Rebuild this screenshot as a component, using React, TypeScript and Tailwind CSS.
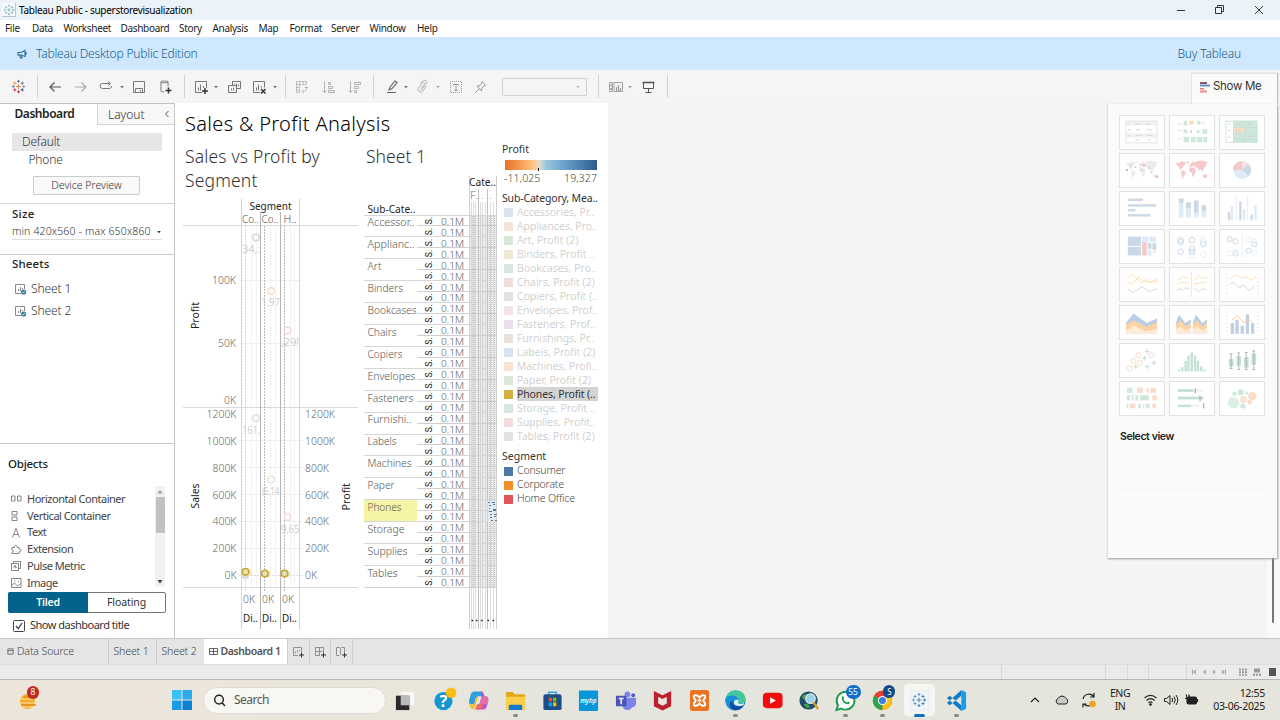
import React from "react";

type Kids = { children?: React.ReactNode };

/* ---------- small helpers ---------- */
function Icon({ children, className = "" }: Kids & { className?: string }) {
  return (
    <svg viewBox="0 0 16 16" fill="none" stroke="currentColor" strokeWidth="1" className={"h-4 w-4 shrink-0 " + className}>
      {children}
    </svg>
  );
}
const Caret = ({ className = "" }: { className?: string }) => (
  <svg viewBox="0 0 6 6" className={"h-1.5 w-1.5 shrink-0 " + className}>
    <path d="M1.200 2h3.600L3 4.200z" fill="currentColor" />
  </svg>
);
const Sep = ({ className = "" }: { className?: string }) => <div className={"h-[23px] w-px shrink-0 bg-[#d2d2d2] " + className} />;

type LabelProps = Kids & { x: number; y: number; w?: number; s?: number; f?: string; a?: "start" | "end" | "middle"; wt?: number; r?: boolean; c?: string };

function Label({ x, y, w, s = 10.5, f = "#555", a = "start", wt = 300, r, c, children }: LabelProps) {
  return (
    <text x={x} y={y} fontSize={s} fill={f} fontWeight={wt} textAnchor={a} textLength={w} lengthAdjust="spacingAndGlyphs" className={c} transform={r ? `rotate(-90 ${x} ${y})` : undefined}>
      {children}
    </text>
  );
}

function Sparkle({ className, colors }: { className: string; colors: string[] }) {
  const pts = [[8, 8, 2.6], [8, 2.4, 1.6], [8, 13.6, 1.6], [2.4, 8, 1.6], [13.6, 8, 1.6], [4, 4.4, 1.7], [12, 4.4, 1.7], [4, 11.6, 1.7], [12, 11.6, 1.7]];
  return (
    <svg viewBox="0 0 16 16" className={className} fill="none" strokeWidth="0.9">
      {pts.map(([x, y, r], i) => (
        <path key={i} d={`M${x - r} ${y}h${2 * r}M${x} ${y - r}v${2 * r}`} stroke={colors[i % colors.length]} />
      ))}
    </svg>
  );
}

/* ---------- window top ---------- */
function TitleBar() {
  return (
    <div className="flex h-5 items-center bg-[#ebf3f8] text-black">
      <div className="ml-0.5 flex h-3.5 w-3.5 items-center justify-center border-r border-b border-[#b9c4cc] bg-[#f8fbfd]">
        <Sparkle className="h-3 w-3" colors={["#5f9fb8", "#7db2c6"]} />
      </div>
      <span className="ml-[3px] text-[10px] tracking-[-0.29px]">Tableau Public - superstorevisualization</span>
      <svg viewBox="0 0 100 20" className="mr-[10px] ml-auto h-5 w-[100px]" fill="none" stroke="#333" strokeWidth="1">
        <path d="M7 10.500h8M45.500 7.500h6v6h-6zM47.500 7V5.500h6v6H52M85 6l8 8M93 6l-8 8" />
      </svg>
    </div>
  );
}

function MenuBar() {
  return (
    <div className="flex h-[17px] items-center bg-white text-[10px] tracking-[-0.32px] text-[#1c1c1c]">
      <span className="w-[27px] pl-[5px]">File</span>
      <span className="w-[31.500px] pl-[5px]">Data</span>
      <span className="w-[57px] pl-[5px]">Worksheet</span>
      <span className="w-[58.500px] pl-[5px]">Dashboard</span>
      <span className="w-[33.500px] pl-[5px]">Story</span>
      <span className="w-[46px] pl-[5px]">Analysis</span>
      <span className="w-[31px] pl-[5px]">Map</span>
      <span className="w-[41.500px] pl-[5px] tracking-[-0.2px]">Format</span>
      <span className="w-[38.500px] pl-[5px]">Server</span>
      <span className="w-[47.500px] pl-[5px]">Window</span>
      <span className="pl-[5px]">Help</span>
    </div>
  );
}

function Banner() {
  return (
    <div className="flex h-[33px] items-center bg-[#cfe8fe] text-[12px] font-light tracking-[-0.18px] text-[#14618f]">
      <svg viewBox="0 0 10 10" className="ml-[17px] h-[10px] w-[10px]" fill="none" stroke="#2a6d94" strokeWidth="1.1">
        <path d="M1 3.500h3l4-2v6l-4-1.500H1zM2.500 6l1 3h1.500l-.6-3M9 3v3" />
      </svg>
      <span className="ml-[9px]">Tableau Desktop Public Edition</span>
      <span className="mr-[39px] ml-auto">Buy Tableau</span>
    </div>
  );
}

function Toolbar() {
  return (
    <div className="flex h-[34px] items-center bg-[#f5f5f5] pb-px text-[#666]">
      <Sparkle className="ml-[11px] h-[15px] w-[15px]" colors={["#e8762d", "#5b6591", "#c72035", "#59879b", "#7199a6", "#eb912c", "#5b6591", "#c72035", "#1f457e"]} />
      <Sep className="ml-[11px]" />
      <Icon className="ml-[9px] text-[#555]"><path d="M14 8H3M7.500 3.500L3 8l4.500 4.500" strokeWidth="1.2" /></Icon>
      <Icon className="ml-[10px] text-[#aaa]"><path d="M2 8h11M8.500 3.500L13 8l-4.500 4.500" strokeWidth="1.1" /></Icon>
      <Icon className="ml-[9px] text-[#777]"><path d="M11.500 4.500H4.500a2.500 2.500 0 000 5h7A2.300 2.300 0 0013.500 7M10 2.500l2.500 2-2.500 2" /></Icon>
      <Caret className="ml-[5px]" />
      <Icon className="ml-1.5 text-[#777]"><path d="M2.500 2.500h11v11h-11zM4.500 13.500V9.500h7v4M9.500 11v1.500" /></Icon>
      <Icon className="ml-[10px] text-[#777]"><path d="M4 2.800c0-1 7-1 7 0v4.500M4 2.800c0 1.300 7 1.300 7 0M4 3v9c0 .5 1 .8 3 .8" /><path d="M11.500 8.500v6M8.500 11.500h6" strokeWidth="1.5" stroke="#333" /></Icon>
      <Sep className="ml-[11px] bg-[#bdbdbd]" />
      <Icon className="ml-2 text-[#777]"><path d="M9 13.500H2.500V2.500h11V9M5.500 11.500V8.500M7.500 11.500V5.500M10.500 9V7" /><path d="M12 9v6M9 12h6" strokeWidth="1.5" stroke="#333" /></Icon>
      <Caret className="ml-1" />
      <Icon className="ml-[7px] text-[#666]"><path d="M6.500 6V2.500h8V9.500h-4M2.500 6.500h8v7h-8zM8.500 5.500V4.500M10.500 7V4.500M12.500 7.500V5.500M5.500 11.500V9.500M7.500 11.500V8.500" strokeWidth=".9" /></Icon>
      <Icon className="ml-[9px] text-[#777]"><path d="M9 13.500H2.500V2.500h11V8.500M5.500 11.500V8.500M7.500 11.500V5.500M10.500 8.500V7" /><path d="M10 10l4.500 4.500M14.500 10L10 14.500" strokeWidth="1.5" stroke="#333" /></Icon>
      <Caret className="ml-[5px]" />
      <Sep className="ml-[7px]" />
      <Icon className="ml-2 text-[#aaa]"><path d="M2.500 2.500h10v3h-10zM2.500 5.500V13.500h3v-8M5.500 2.500v3M9 2.500v3M2.500 8.500h3M2.500 11h3M12.500 8v1.500a3 3 0 01-3 3H8M11 9l1.500-1.500L14 9M9.500 11L8 12.500 9.500 14" strokeWidth=".9" strokeDasharray="2 .6" /></Icon>
      <Icon className="ml-[11px] text-[#aaa]"><path d="M3.500 2.500v11M1.500 11.500l2 2 2-2M7.500 3.500h2v2h-2zM7.500 7.500h4v2h-4zM7.500 11.500h6v2h-6z" strokeWidth=".9" /></Icon>
      <Icon className="ml-[10px] text-[#aaa]"><path d="M3.500 2.500v11M1.500 11.500l2 2 2-2M7.500 3.500h6v2h-6zM7.500 7.500h4v2h-4zM7.500 11.500h2v2h-2z" strokeWidth=".9" /></Icon>
      <Sep className="ml-[10px]" />
      <Icon className="ml-[10px]"><path d="M5 11l1-3 5-6 2 1.500-5 6zM3 13.500h9" strokeWidth="1.1" /></Icon>
      <Caret className="ml-[3px]" />
      <Icon className="ml-[5px] text-[#aaa]"><path d="M11.500 5.500l-4.500 6a1.800 1.800 0 01-3-2l4.500-6a1.300 1.300 0 012 1.500L7 9.500M12.500 7l-4 5.500a2.300 2.300 0 01-2.500.8M6 4.500l2-2a2.500 2.500 0 014.500 2.500" strokeWidth=".9" /></Icon>
      <Caret className="ml-[5px] text-[#aaa]" />
      <Icon className="ml-[7px] text-[#999]"><path d="M2.500 2.500h11v11h-11z" strokeDasharray="1 1" strokeDashoffset=".5" /><path d="M5.500 6.500V5.500h5v1M8 5.500V11.500M6.500 11.500h3" /></Icon>
      <Icon className="ml-2 text-[#999]"><path d="M10 2.500l3.500 4-1.500.5-2 2-.5 3-4.500-5 3-.5 1.500-2zM7 10l-4 4" /></Icon>
      <div className="ml-[14px] flex h-[18px] w-[85px] items-center justify-end rounded-[1px] border border-[#d0d0d0] pr-[5px] text-[#bbb]"><Caret /></div>
      <Sep className="ml-[11px] bg-[#bdbdbd]" />
      <Icon className="ml-[9px] text-[#999]"><path d="M1.500 3.500h3v2.500h-3zM1.500 7h3v2.500h-3zM1.500 10.500h3v2h-3zM6 3.500h8.500v9H6z" strokeWidth=".9" /><path d="M8.500 12V8M10.500 12V6M12.500 12V9" strokeWidth="1.200" /></Icon>
      <Caret className="ml-[3px] text-[#999]" />
      <Icon className="ml-[7px] text-[#555]"><path d="M3.500 4v5.500h10V4M8.500 9.500v4M5.500 13.500h6" /><path d="M2.500 3.500h12" strokeWidth="1.600" /></Icon>
      <Sep className="ml-[11px]" />
    </div>
  );
}

/* ---------- side pane ---------- */
const SheetIcon = () => (
  <svg viewBox="0 0 12 12" className="h-3 w-3" fill="none" stroke="#888">
    <path d="M6 10.500H.5V1.500h9V6M3.500 8V6M5.500 8V4M7.500 6V5" />
    <circle cx="8.600" cy="9" r="2.600" fill="#3a82a0" stroke="none" />
    <path d="M7.500 9l.9.9 1.300-1.700" stroke="#fff" strokeWidth=".7" />
  </svg>
);

const objects: [string, React.ReactNode][] = [
  ["Horizontal Container", <path d="M.5 3h3.500v5H.5zM6.500 3h3.500v5H6.500z" />],
  ["Vertical Container", <path d="M1 1.500h5v3.500H1zM1 7h5v3.500H1z" />],
  ["Text", <path d="M1.500 10.500L5 1.500l3.500 9M3 7.500h4" />],
  ["Extension", <path d="M1 4.500h2.500c-1-3 3.500-3 2.500 0H8v2c2.500-.7 2.500 3 0 2.300v1.700H1V9c2 .3 2-2.300 0-2z" />],
  ["Pulse Metric", <path d="M.5 3.500h7v7h-7zM2.500 3.500v-2h7v7h-2M2 7h1.200L4 5.200l.9 3L5.600 7" />],
  ["Image", <path d="M.5 1.500H10v9H.5zM.5 8.500L3.500 6l3 3 3-2.500M3 4h1.200M7 4.500h1" />],
];

function SidePane() {
  return (
    <aside className="flex h-[535px] w-[175px] shrink-0 flex-col border-t border-r border-[#c4c4c4] bg-white font-light text-[#333]">
      <div className="flex h-[21px] shrink-0">
        <div className="w-[97px] pt-px pl-[14.500px] text-[12px] leading-[18px] font-semibold tracking-[-0.45px] text-[#222]">Dashboard</div>
        <div className="flex flex-1 border-b border-l border-[#d4d4d4] bg-[#f8f8f8]">
          <span className="w-[66px] pl-[10px] text-[12px] leading-[22px]">Layout</span>
          <svg viewBox="0 0 6 8" className="mt-[6px] h-[8px] w-[6px]" fill="none" stroke="#555"><path d="M4.500 1L1.500 4l3 3" /></svg>
        </div>
      </div>
      <div className="mt-2 ml-3 flex h-[18px] w-[150px] shrink-0 items-center bg-[#e6e6e6] pl-[10px] text-[12px] tracking-[-0.15px]">Default</div>
      <div className="flex h-[17px] shrink-0 items-center pl-[28.500px] text-[12px] tracking-[-0.2px]">Phone</div>
      <div className="mt-2 ml-[33px] flex h-[19px] w-[107px] shrink-0 items-center justify-center rounded-[1px] border border-[#ccc] bg-[#f9f9f9] text-[10.500px]">Device Preview</div>
      <div className="mt-2 h-px shrink-0 bg-[#d4d4d4]" />
      <div className="mt-[2px] h-4 shrink-0 pl-3 text-[11.5px] leading-4 font-medium tracking-[0.3px] text-[#222]">Size</div>
      <div className="ml-3 flex h-[18px] w-[150px] shrink-0 items-center justify-between border-b border-[#ddd] pt-[2px] text-[10.500px] tracking-[0.14px]">
        <span className="whitespace-nowrap">min 420x560 - max 650x860</span><Caret />
      </div>
      <div className="mt-[14px] h-px shrink-0 bg-[#c9c9c9]" />
      <div className="mt-px h-4 shrink-0 pl-3 text-[11.5px] leading-4 font-medium tracking-[0.1px] text-[#222]">Sheets</div>
      <div className="mt-[6px] flex h-[22px] shrink-0 items-center gap-1 pl-[15px] text-[12px] tracking-[-0.1px]"><SheetIcon />Sheet 1</div>
      <div className="flex h-[21px] shrink-0 items-center gap-1 pl-[15px] text-[12px] tracking-[-0.1px]"><SheetIcon />Sheet 2</div>
      <div className="mt-auto h-px shrink-0 bg-[#ccc]" />
      <div className="h-[42px] shrink-0 pt-3 pl-[8px] text-[11.5px] leading-4 font-medium tracking-[-0.25px] text-[#222]">Objects</div>
      <div className="flex h-[101px] shrink-0">
        <div className="flex w-[155px] flex-col pt-[5px] text-[11px] font-normal tracking-[-0.47px] text-[#444]">
          {objects.map(([n, d]) => (
            <div key={n} className="flex h-[16.700px] shrink-0 items-center pl-[11px]">
              <svg viewBox="0 0 12 12" className="mr-1 h-3 w-3" fill="none" stroke="#777" strokeWidth=".9">{d}</svg>
              <span>{n}</span>
            </div>
          ))}
        </div>
        <div className="flex w-[10px] flex-col items-center bg-[#f1f1f1]">
          <svg viewBox="0 0 10 11" className="h-[11px] w-[10px]"><path d="M2.500 7.500h5L5 4z" fill="#999" /></svg>
          <div className="h-9 w-[9px] bg-[#c1c1c1]" />
          <svg viewBox="0 0 10 11" className="mt-auto h-[11px] w-[10px]"><path d="M2.500 4h5L5 7.500z" fill="#444" /></svg>
        </div>
      </div>
      <div className="relative mt-[5px] ml-[8px] flex h-[21px] w-[158px] shrink-0 rounded-[2px] border border-[#777] bg-white text-[10.500px] font-normal text-[#333]">
        <div className="-my-px -ml-px flex w-[80px] items-center justify-center rounded-l-[2px] bg-[#03638c] font-semibold tracking-[-0.2px] text-white">Tiled</div>
        <div className="flex flex-1 items-center justify-center tracking-[-0.1px]">Floating</div>
      </div>
      <div className="flex h-[25px] shrink-0 items-center gap-[5px] pl-[13px] text-[11px] font-normal tracking-[-0.5px] text-[#333]">
        <svg viewBox="0 0 12 12" className="h-3 w-3" fill="none" stroke="#444"><rect x=".5" y=".5" width="11" height="11" rx="1" /><path d="M3 6l2.200 2.600L9 3" strokeWidth="1.300" /></svg>
        Show dashboard title
      </div>
    </aside>
  );
}

/* ---------- dashboard ---------- */
const SALES = ["1200K", "1000K", "800K", "600K", "400K", "200K", "0K"];
const SALES_Y = [414, 440.5, 467.500, 494.500, 521, 548, 575];

function SegmentChart() {
  return (
    <svg viewBox="176 195 186 437" className="h-[437px] w-[186px]" fill="none" strokeWidth="1">
      <path d="M251.500 226v361M256.500 226v361M270.500 226v361M275.500 226v361M290.500 226v361M294.500 226v361" stroke="#f3f3f3" />
      <path d="M239 280.500h60M239 343.500h60M239 440.500h64M239 467.500h64M239 494.500h64M239 521.500h64M239 548.500h64" stroke="#efefef" />
      <path d="M239 575.500h64" stroke="#dcdcdc" strokeDasharray="2 1" />
      <path d="M183 225.500h175M183 407.500h175M183 587.500h175" stroke="#dadada" />
      <path d="M241.500 199v430M299.500 199v430" stroke="#d4d4d4" />
      <path d="M260.500 212v417M280.500 212v417" stroke="#b4b4b4" />
      <path d="M245.500 226v365" stroke="#d8d8d8" strokeDasharray="2 1" />
      <path d="M264.500 226v365M284.500 226v365" stroke="#b8b8b8" strokeDasharray="2 1" />
      <g strokeWidth="1.300">
        <circle cx="256" cy="237.500" r="3.300" stroke="#ccd3df" /><circle cx="271" cy="291" r="3.300" stroke="#f5dcc0" /><circle cx="287.500" cy="330.500" r="3.300" stroke="#eed0d2" />
        <circle cx="256" cy="418" r="3.300" stroke="#d5dce6" /><circle cx="271" cy="479.500" r="3.300" stroke="#f5dfc8" /><circle cx="287.500" cy="517" r="3.300" stroke="#f0d6d8" />
      </g>
      <circle cx="245.500" cy="576" r="3.500" fill="#ddd" /><circle cx="249" cy="573" r="3" fill="#f3ead0" /><circle cx="267" cy="574" r="3.500" fill="#ede3bf" /><circle cx="286.500" cy="574" r="3.500" fill="#ede3bf" />
      <g stroke="#c3a935" strokeWidth="1.600" fill="#eadfb4">
        <circle cx="245.500" cy="571.800" r="3.300" /><circle cx="264.800" cy="573.500" r="3.300" /><circle cx="284.500" cy="573.500" r="3.300" />
      </g>
      <Label x={249.500} y={210} w={42} f="#222" wt={400}>Segment</Label>
      <Label x={242} y={223} w={17}>Co..</Label><Label x={261.500} y={223} w={17}>Co..</Label><Label x={283.500} y={223} w={13}>H..</Label>
      <Label x={242} y={253} w={18} f="#bbb">34,:</Label><Label x={261.500} y={306} w={18.500} f="#bbb">1,97</Label><Label x={281} y={346} w={18} f="#bbb">,29!</Label>
      <Label x={242} y={434} w={18} f="#bbb">161,</Label><Label x={261.500} y={495} w={18} f="#bbb">)6,14</Label><Label x={281} y={533} w={18.500} f="#bbb">9,65</Label>
      <Label x={236} y={284} w={24} a="end" f="#666">100K</Label><Label x={236} y={347} w={18} a="end" f="#666">50K</Label><Label x={236} y={404} w={12} a="end" f="#666">0K</Label>
      {SALES.map((t, i) => (
        <React.Fragment key={t}>
          <Label x={236.500} y={SALES_Y[i] + 4} w={t.length * 6} a="end" f="#666">{t}</Label>
          <Label x={305} y={SALES_Y[i] + 4} w={t.length * 6} f="#666">{t}</Label>
        </React.Fragment>
      ))}
      <Label x={198.500} y={329} w={27} f="#222" wt={400} r>Profit</Label>
      <Label x={198.500} y={508.500} w={25} f="#222" wt={400} r>Sales</Label>
      <Label x={350} y={510.500} w={27.500} f="#222" wt={400} r>Profit</Label>
      {[243, 262, 282].map((x) => (
        <React.Fragment key={x}>
          <Label x={x} y={603} w={12} f="#666">0K</Label><Label x={x} y={622} w={15} f="#222" wt={400}>Di..</Label>
        </React.Fragment>
      ))}
    </svg>
  );
}

const SUBS: [string, number][] = [["Accessor..", 47], ["Applianc..", 47], ["Art", 14], ["Binders", 35.500], ["Bookcases", 49], ["Chairs", 29], ["Copiers", 35], ["Envelopes", 48], ["Fasteners", 46], ["Furnishi..", 44], ["Labels", 29], ["Machines", 44], ["Paper", 27], ["Phones", 34], ["Storage", 37], ["Supplies", 40], ["Tables", 30]];

function SubCategoryTable() {
  const top = 215.500;
  const step = 21.900;
  return (
    <svg viewBox="362 172 138 460" className="h-[460px] w-[138px]" fill="none">
      <rect x="364" y={top + 13 * step} width="53" height={step} fill="#f5f3a4" />
      <rect x="470" y={top} width="27" height={17 * step} fill="#ececec" />
      <path d="M472.500 216v372M474.500 216v372M482.500 216v372M489.500 216v372M491.500 216v372M494.500 216v372" stroke="#c4c4c4" strokeDasharray="1 1" />
      <path d="M469.500 176v453M496.500 176v453" stroke="#cfcfcf" />
      <path d="M478.500 189v440M487.500 189v440" stroke="#c0c0c0" />
      <path d="M471.500 202v427M473.500 202v427M475.500 202v427M480.500 202v427M482.500 202v427M485.500 202v427M490.500 202v427M493.500 202v427" stroke="#cecece" strokeWidth=".7" />
      {SUBS.map(([n, w], i) => {
        const y = top + i * step;
        return (
          <g key={n}>
            <path d={`M364 ${Math.round(y) - 0.5}H497`} stroke="#d6d6d6" />
            <path d={`M417 ${Math.round(y + step / 2) - 0.5}H497`} stroke="#cecece" />
            <Label x={367.500} y={y + 10.800} w={w}>{n}</Label>
            {[9.300, 20.250].map((d) => (
              <React.Fragment key={d}>
                <Label x={441} y={y + d} w={23} s={9.300} f="#666" c="font-['Roboto']">0.1M</Label>
                <Label x={432} y={y + d - 0.500} w={7.500} s={9} f="#111" wt={400} c="font-['Roboto']" r>S.</Label>
              </React.Fragment>
            ))}
          </g>
        );
      })}
      <path d="M364 587.500H497" stroke="#d2d2d2" />
      <rect x="487.500" y="501" width="8.500" height="21" fill="#e3ebf1" />
      <path d="M488 502.500h2m2 0h3m-6 3h2m2-1h2m-6 4h1m3 1h3m-7 2h3m1-1h3m-6 4h2m2 0h3m-7 3h2m2-1h2m-5 4h2m2 0h2" stroke="#50789c" strokeWidth="1.200" />
      <Label x={469} y={186} w={27} f="#222" wt={400}>Cate..</Label>
      <Label x={470} y={199} w={8} f="#777">F.</Label><Label x={481} y={199} s={9} f="#888">.</Label><Label x={489} y={199} s={9} f="#888">.</Label>
      <Label x={367.500} y={213} w={48} f="#222" wt={400}>Sub-Cate..</Label>
      <path d="M471.500 620.500h1.500M476 620.500h1.500M481 620.500h1.500M487.500 620.500h1.500M492.500 620.500h1.500" stroke="#222" strokeWidth="1.500" />
    </svg>
  );
}

const LEGEND: [string, string][] = [
  ["Accessories, Pr..", "bg-[#d9e3ed]"], ["Appliances, Pro..", "bg-[#f6e3d3]"], ["Art, Profit (2)", "bg-[#dae8da]"], ["Binders, Profit ..", "bg-[#efe7d3]"], ["Bookcases, Pro..", "bg-[#d8e5e5]"],
  ["Chairs, Profit (2)", "bg-[#f3dcdd]"], ["Copiers, Profit (..", "bg-[#e2e1e1]"], ["Envelopes, Prof..", "bg-[#f3e2e8]"], ["Fasteners, Prof..", "bg-[#e9dfe8]"], ["Furnishings, Pr..", "bg-[#e8e0dc]"],
  ["Labels, Profit (2)", "bg-[#d9e3ed]"], ["Machines, Profi..", "bg-[#f6e3d3]"], ["Paper, Profit (2)", "bg-[#dae8da]"], ["Phones, Profit (..", "bg-[#d2b13d]"], ["Storage, Profit ..", "bg-[#d8e5e5]"],
  ["Supplies, Profit..", "bg-[#f3dcdd]"], ["Tables, Profit (2)", "bg-[#e2e1e1]"],
];

function Legends() {
  return (
    <div className="flex w-[106px] flex-col pt-px pl-[2px] text-[10.5px] font-light whitespace-nowrap text-[#444]">
      <div className="h-[19px] leading-[16px] font-normal text-[#333]">Profit</div>
      <div className="relative ml-[3px] h-[10px] w-[92px] bg-[linear-gradient(90deg,#e8702a,#f8a65a_20%,#fbc98d_32%,#dfdcd0_37%,#97c7dc_45%,#6aa1cb_65%,#2b5c8a)]">
        <div className="absolute top-[8px] left-[33px] h-[3px] w-px bg-black" />
      </div>
      <div className="flex h-[17px] w-[95px] items-center justify-between pl-[2px] tracking-[0.1px]"><span>-11,025</span><span>19,327</span></div>
      <div className="mt-[4px] h-[14px] leading-[14px] font-normal tracking-[-0.17px] text-[#333]">Sub-Category, Mea..</div>
      {LEGEND.map(([n, c]) => (
        <div key={n} className="flex h-[14px] items-center gap-1 pl-[2px]">
          <div className={"h-[9px] w-[9px] " + c} />
          <span className={"h-[14px] w-[81px] leading-[14px] " + (n.startsWith("Phones") ? "bg-[#d4d4d4] font-normal tracking-[-0.12px] text-[#333]" : "tracking-[0.15px] text-[#bebebe]")}>{n}</span>
        </div>
      ))}
      <div className="mt-[6px] h-[15px] leading-[15px] font-normal text-[#333]">Segment</div>
      {[["Consumer", "bg-[#4e79a7]"], ["Corporate", "bg-[#f28e2b]"], ["Home Office", "bg-[#e15759]"]].map(([n, c]) => (
        <div key={n} className="flex h-[14px] items-center gap-1 pl-[2px] tracking-[-0.15px]"><div className={"h-[9px] w-[9px] " + c} /><span>{n}</span></div>
      ))}
    </div>
  );
}

function Dashboard() {
  return (
    <main className="h-[535px] w-[433px] shrink-0 bg-white pt-px pl-px font-light">
      <h1 className="h-[36px] pt-[6px] pl-[9px] text-[20px] leading-[28px] tracking-[0.34px] text-black">Sales &amp; Profit Analysis</h1>
      <div className="flex">
        <section className="w-[186px]">
          <h2 className="h-[55px] pt-[5px] pl-[9px] text-[17.500px] leading-[23.500px] tracking-[0.17px] text-[#333]">Sales vs Profit by<br />Segment</h2>
          <SegmentChart />
        </section>
        <section className="w-[138px]">
          <h2 className="h-[32px] pt-[5px] pl-1 text-[17.500px] leading-[23.500px] tracking-[0.05px] text-[#333]">Sheet 1</h2>
          <SubCategoryTable />
        </section>
        <Legends />
      </div>
    </main>
  );
}

/* ---------- Show Me ---------- */
const B = "#cbd8e6", LB = "#deebf7", O = "#fbdcb8", G = "#cfe8dc", R = "#f6c9c9", K = "#ddd";
const bars = (list: number[][], fill: string) => list.map(([x, y, w, h], i) => <rect key={i} x={x} y={y} width={w} height={h} fill={fill} />);
const rings = (list: number[][], stroke: string, r = 2.700) => list.map(([x, y], i) => <circle key={i} cx={x} cy={y} r={r} fill="none" stroke={stroke} strokeWidth=".8" />);
const WORLD = "M6 10l2-1 1 .6 2-1.600 4 .2 1.500.8-.5 2-2 1.200-.6 2-1.500.8-.6 2-1.300-.8-.5-2.200-2.200-1.800zM12 17.500l2.500.3 2 1.700-.7 2.200-1.600 1.300-.8 3.500-1-.6-.3-3.500-1-2.400zM17 8l2.500-.6-.3 2-1.400 1zM21.500 10.500l1.800-2.500 2 .3.300 2.700-1.200 1.600-2.300.3-.8 1.200-1-.3.3-2zM20.700 14.500l3.800-.3 2 2.600 1 .8-1.300 2.400-.6 2.600-1.200 1.600-1-.4-.7-4-2-1.200-.7-2.300zM25.500 9l3.500-1.500 4-.7 5 1.300 1.800.8-1.500 1.300-.5 2.700-1.600 1.300-.8 2.600-1.300.4.3 2.600-1-1.600-1.300-2.400-1.300 2.600-1.200-3-1.800-1.200-2.400-.6zM34.500 22.500l2.700-1.200 2 1.600-.5 2.300-1.500.2-2.600-.6z";

const views: React.ReactNode[] = [
  <>{bars([[6, 5, 33, 5], [6, 18, 33, 5]], "#f3f3f3")}<rect x="6" y="5.500" width="33" height="23" fill="none" stroke="#e2e2e2" /><path d="M8 8.500h3M15 8.500h7M27 8.500h5M8 14.500h4M17 14.500h4M28 14.500h6M8 21h3M16 20.500h8M28 20.500h6M16 25.500h4M29 25.500h3" stroke="#d4d4d4" /></>,
  <>{bars([[14, 5, 4, 5], [28, 5, 4, 4], [14, 14, 4, 4], [34, 14, 5, 5], [14, 22, 6, 6], [22, 22, 5, 6], [28, 22, 6, 6], [35, 22, 4, 6], [28, 15, 3, 3], [34, 6, 2, 2]], G)}{bars([[20, 5, 5, 4]], O)}{bars([[21, 15, 2, 3]], R)}<path d="M8 8.500h4M8 15.500h4M8 24.500h4" stroke="#ddd" /></>,
  <>{bars([[14, 5, 25, 23]], G)}{bars([[14, 12, 12, 6]], "#fbe0c8")}<path d="M6 5.500h33v22.500H6zM14 5.500V28M26 5.500V28M14 12h25M14 18h25M14 25h25" fill="none" stroke="#c2dfd0" strokeWidth=".8" /><path d="M8 8.500h3M8 15.500h3M8 22.500h3M16 8.500h6M29 8.500h5M16 15.500h6M29 21.500h6" stroke="#c4cec8" strokeWidth=".8" /></>,
  <><path d={WORLD} fill="#ececec" />{[[7, 17], [11, 12], [21, 11], [25, 12], [31, 15], [33, 19], [39, 24], [16, 14], [23, 17]].map(([x, y], i) => <circle key={i} cx={x} cy={y} r={i % 3 ? 0.900 : 1.400} fill="#ebb9bc" />)}</>,
  <path d={WORLD} fill={R} />,
  <><circle cx="23" cy="17" r="9.500" fill={LB} /><path d="M23 17L23 7.500A9.500 9.500 0 0013.500 17z" fill={R} /><path d="M23 17V7.500a9.500 9.500 0 016.500 2.500z" fill="#fae2e2" /><path d="M23 17l6.500-7a9.500 9.500 0 01.5 13.500z" fill={B} /></>,
  <>{bars([[8, 7, 16, 2.500], [8, 13, 30, 2.500], [8, 18, 8, 2.500], [8, 23.500, 24, 2.500]], B)}</>,
  <>{bars([[9, 12, 5, 15], [16.500, 17, 5.500, 10], [25, 22, 5, 5], [33, 20, 5, 7]], LB)}{bars([[9, 7, 5, 5], [16.500, 11, 5.500, 6], [25, 9, 5, 13], [33, 14, 5, 6]], B)}</>,
  <>{bars([[8, 21, 2.500, 9], [20, 10, 2.500, 20], [32, 24, 2.500, 6]], B)}{bars([[11, 15, 2.500, 15], [24, 18, 2.500, 12], [36, 14, 2.500, 16]], LB)}<path d="M17 4v26M29 4v26" stroke={K} strokeWidth=".7" /></>,
  <>{bars([[8, 7, 14, 10], [8, 18, 14, 9], [29, 14, 4, 6], [34, 14, 4, 7]], B)}{bars([[23, 7, 7, 6], [31, 7, 7, 6], [29, 21, 4, 6], [34, 22, 4, 2]], LB)}{bars([[23, 13, 5, 14]], R)}</>,
  <>{rings([[11, 11], [11, 13], [23, 11], [11, 23], [23, 20], [23, 23], [35, 15]], "#bdcfe0", 3)}{rings([[35, 10], [35, 26], [35, 13], [23, 28]], LB, 3)}</>,
  <>{rings([[10, 10], [16, 12], [16, 25], [36, 15], [30, 22]], "#bdcfe0")}{rings([[10, 9], [10, 25], [30, 10], [36, 12], [36, 24], [16, 23]], LB)}<path d="M23 4v25" stroke="#f0dcdc" strokeWidth=".7" /></>,
  <g fill="none" strokeWidth="1"><path d="M8 10l4-4 10 10 6-4 4 3 7-3M8 15l5 2 6-7 5 4 7 1 8-1" stroke={O} /><path d="M8 22l5 4 10-6 8 5 8-3" stroke={B} /></g>,
  <g fill="none" strokeWidth="1"><path d="M7 13l7-4 5 2M7 17l5-2 3 1 5-1M25 13l5-5 4 3 5-1M25 17l8-1 5-1" stroke={O} /><path d="M7 24l3-2 3 2 3-3 4 1M25 21l5 4 4-3 4 1" stroke={B} /><path d="M22.500 4v27" stroke={K} strokeWidth=".7" /></g>,
  <g fill="none" strokeWidth="1"><path d="M10 12l6-5 6 4 5-2 6 4 5-4" stroke={O} /><path d="M10 17l4-2 6 6 5-3 6 6 5-5" stroke={B} /><path d="M7 6v24M40 6v24" stroke="#e3e3e3" strokeWidth="2" strokeDasharray="1 3" /></g>,
  <><path d="M6 29V18l8-10 14 10 11-5v16z" fill="#b9cde4" /><path d="M6 29V20l8-5 14 7 11-5v12z" fill="#fbd4a5" /><path d="M6 29V26l9-5 12 6 12-3v5z" fill="#fdebd7" /></>,
  <><path d="M6 29V18l3-9 7 9 6-4v15zM24 29V18l3-9 7 9 5-4v15z" fill="#b9cde4" /><path d="M6 29V20l5-5 6 7 5-5v12zM24 29V20l5-5 5 7 5-5v12z" fill="#fbd4a5" /><path d="M6 29v-4l5-3 5 4 6-3v6zM24 29v-4l4-3 6 4 5-3v6z" fill="#fdebd7" /></>,
  <>{bars([[11, 18, 3.500, 11.500], [16, 15, 3.500, 14.500], [21.500, 21, 3.500, 8.500], [27, 9, 3.500, 20.500], [32.500, 18, 3.500, 11.500]], "#bfd0e3")}<path d="M12 15l6-5 7 8 5-4 4 3" fill="none" stroke="#fbc99a" /><path d="M7 6v24M40 6v24" stroke="#e3e3e3" strokeWidth="2" strokeDasharray="1 3" /></>,
  <>{rings([[10, 26], [14, 18], [19, 12], [21, 20], [33, 12]], "#fbd2b4")}<path d="M26 8h5M28.500 5.500v5M14 24h5M16.500 21.500v5M23 15h5M25.500 12.500v5M33 20h5M35.500 17.500v5M26 24h5M28.500 21.500v5" stroke="#b8dccb" strokeWidth=".9" /></>,
  <>{bars([[8, 27, 2.500, 2], [11.500, 24.500, 2.500, 4.500], [15, 18, 2.500, 11], [18, 12, 2.500, 17], [21.500, 9, 2.500, 20], [25, 12, 2.500, 17], [28, 18, 2.500, 11], [31.500, 24, 2.500, 5], [35, 27, 2.500, 2]], "#c3e2d3")}</>,
  <>{bars([[9, 16, 5, 8], [17, 13, 5, 10], [25, 14, 5, 11], [33, 10, 5, 12]], "#c3e2d3")}<path d="M11.500 10v16M19.500 9v18M27.500 8.500v19M35.500 7v20M10 10.500h3M18 9.500h3M26 9h3M34 7.500h3M10 26h3M18 27h3M26 27h3M34 27h3" stroke="#aaa" strokeWidth=".9" /></>,
  <>{bars([[7, 6, 6, 5.500], [7, 14, 3, 5.500], [12, 14, 2, 5.500], [16, 14, 3, 5.500], [21, 14, 9, 5.500], [7, 23, 1.500, 5], [19, 23, 3, 5], [27, 23, 4, 5]], G)}{bars([[18, 6, 6, 5.500], [28, 6, 2, 5.500], [32, 6, 6, 5.500], [34, 14, 5, 5.500], [10, 23, 6, 5], [24, 23, 1.500, 5], [34, 23, 4, 5]], "#fbdccb")}</>,
  <>{bars([[8, 7.500, 17, 3], [8, 15.500, 27, 3], [8, 24, 14, 2.500]], "#c3e2d3")}{bars([[26, 7.500, 9, 3], [22, 24, 9, 2.500]], "#f2f2f2")}<path d="M26.500 6.500v5.500M31.500 14.500v6M35.500 22.500v5.500" stroke="#999" /></>,
  <><circle cx="14" cy="22" r="6" fill="#dcefe5" /><circle cx="21.500" cy="11" r="3.300" fill={G} /><circle cx="15" cy="12.500" r="2.300" fill={G} /><circle cx="24.500" cy="18.500" r="3.800" fill="#fce2d0" /><circle cx="34" cy="15" r="4.500" fill="#fbdccb" /><circle cx="24" cy="25.500" r="2.800" fill={G} /><circle cx="31" cy="21.500" r="2.300" fill="#f5d8bf" /><circle cx="28" cy="12" r="2" fill="#dcefe5" /></>,
];

function ShowMe() {
  return (
    <div className="absolute top-[73px] right-[3px] z-10 flex w-[170px] flex-col items-end text-[#333]">
      <div className="flex h-[31px] w-[86px] items-center border-t border-l border-[#e4e4e4] bg-[#fafafa] pb-1 pl-[7px] shadow-[1px_0_1px_#bbb]">
        <svg viewBox="0 0 12 12" className="h-3 w-3"><rect x="1" y="1" width="7" height="2" fill="#8a5a78" /><rect x="1" y="3.500" width="10" height="2" fill="#6f8cc0" /><rect x="1" y="7" width="4" height="1.500" fill="#e07a7a" /><rect x="1" y="9.500" width="7" height="2" fill="#e88" /></svg>
        <span className="ml-[2px] font-['Inter','Open_Sans',sans-serif] text-[11.500px] tracking-[-0.3px] whitespace-nowrap">Show Me</span>
      </div>
      <div className="h-[454px] w-full border-l border-[#ddd] bg-[#fafafa] pt-[11px] pl-[11px] shadow-[1px_1px_2px_#999]">
        <div className="grid grid-cols-[46px_46px_46px] gap-x-1 gap-y-[3px]">
          {views.map((v, i) => (
            <svg key={i} viewBox="0 0 46 35" className="h-[35px] w-[46px] border border-[#e2e2e2] bg-white">{v}</svg>
          ))}
        </div>
        <div className="mt-[13px] ml-px font-['Inter','Open_Sans',sans-serif] text-[10.500px] leading-4 font-semibold tracking-[-0.4px] text-[#222]">Select view</div>
        <div className="mt-[44px] mr-[10px] h-px bg-[#f2f2f2]" />
      </div>
    </div>
  );
}

/* ---------- bottom ---------- */
const NewTab = ({ d }: { d: string }) => (
  <div className="flex w-[21.500px] items-center justify-center border-r border-[#cfcfcf]">
    <svg viewBox="0 0 12 12" className="h-[12px] w-[12px]" fill="none" stroke="#888" strokeWidth=".9"><path d={d} /><path d="M9.500 6.500v5M7 9h5" stroke="#333" strokeWidth="1" /></svg>
  </div>
);

function SheetTabs() {
  return (
    <div className="flex h-[26px] border-t border-[#c8c8c8] bg-[#e5e5e5] text-[10.5px] font-light whitespace-nowrap text-[#444]">
      <div className="flex w-[109px] items-center border-r border-[#cfcfcf] pl-[7px] tracking-[-0.1px]">
        <svg viewBox="0 0 8 8" className="mr-[3px] h-[7px] w-[7px]" fill="none" stroke="#666"><path d="M1 1h6v6H1zM1 3h6" /></svg>Data Source
      </div>
      <div className="w-[48px] border-r border-[#cfcfcf] pr-[3px] text-center leading-[25px] tracking-[-0.1px]">Sheet 1</div>
      <div className="w-[47px] pr-[3px] text-center leading-[25px] tracking-[-0.1px]">Sheet 2</div>
      <div className="flex w-[84px] items-center border-r border-[#cfcfcf] bg-white pl-[4.500px] font-semibold tracking-[-0.4px] text-[#555]">
        <svg viewBox="0 0 9 9" className="mr-[3px] h-[9px] w-[9px]" fill="none" stroke="#555" strokeWidth=".9"><path d="M.5 1.500h8v6h-8zM.5 4.500h8M4.500 1.500v6" /></svg>Dashboard 1
      </div>
      <NewTab d="M6 9.500H1.500V1.500h8V6M3.500 7.500V5.500M5.500 6.500V4.500M7.500 5V4" />
      <NewTab d="M6 9.500H1.500V1.500h8V6M1.500 5.500h7M5.500 1.500v8" />
      <NewTab d="M4.500 9.500H1.500V1.500h3l1 1 1-1h3V6M5.500 2.500V9" />
    </div>
  );
}

function StatusBar() {
  return (
    <div className="flex h-4 justify-end border-t border-b border-t-[#dcdcdc] border-b-[#b8b8b0] bg-[#ebebeb]">
      <div className="w-[104px] border-l border-[#d6d6d6]" />
      <div className="w-[22px] border-l border-[#d6d6d6]" />
      <div className="w-[21px] border-l border-[#d6d6d6]" />
      <div className="w-[38px] border-l border-[#d6d6d6]" />
      <div className="w-[48px] border-l border-[#d6d6d6]">
        <svg viewBox="0 0 46 14" className="h-[14px] w-[46px]" fill="#aaa"><path d="M5 4.500h1v5H5zM9 4.500v5L6 7zM19 4.500v5L16 7zM26 4.500v5L29 7zM35 4.500v5L38 7zM38 4.500h1v5h-1z" /></svg>
      </div>
      <div className="w-[46px]">
        <svg viewBox="0 0 46 14" className="h-[14px] w-[46px]" fill="#999"><path d="M5 3.500h2v2H5zM8 3.500h2v2H8zM11 3.500h2v2h-2zM5 6.300h2v2H5zM8 6.300h2v2H8zM11 6.300h2v2h-2zM5 9.200h2v1.500H5zM8 9.200h2v1.500H8zM11 9.200h2v1.500h-2zM20 3.500h6v4h-6zM19 8.800h2v2h-2zM22 8.800h2v2h-2zM25 8.800h2v2h-2z" /><path d="M35 3h7v8h-7z" fill="#555" /></svg>
      </div>
    </div>
  );
}

const apps: { node: React.ReactNode; dot?: boolean; active?: boolean }[] = [
  { node: <><rect x="7" y="3" width="14" height="14" fill="#f8f8f8" /><rect x="2" y="7" width="14" height="15" fill="#2a2a2a" /><rect x="7" y="7" width="9" height="10" fill="#bbb" /></> },
  { node: <><circle cx="13" cy="12.500" r="9.500" fill="#1296d4" /><text x="13" y="19" fontSize="17" fontWeight="700" fill="#fff" textAnchor="middle">?</text><circle cx="21" cy="4" r="5.500" fill="#fbbc13" /></> },
  { node: <><path d="M8 2.500h6.500c1.500 0 2 1 2.500 2.500l.8 2.500H12c-1.500 0-2.300 1-2.800 2.500L7.500 16H4C1 16 2 12 3 9l1-3.500c.6-2 2-3 4-3z" fill="#2b9fe0" /><path d="M2.500 13c.3 3 1 3 3.500 3h1.500L9.200 10c.5-1.500 1.300-2.500 2.800-2.500L9.500 15 8 19c-.5 1.300-1 2-2 2-2.500-.5-4-4-3.500-8z" fill="#f0bf3a" /><path d="M14 2.500c2.500 0 3 .5 3.500 2.500l.8 2.500h1.500C22 8 23 10 22 13l-1.300 5c-.7 2.500-2 3.500-4 3.500H9c2 0 2.500-1.500 3-3l3-9.500c.5-1.500 0-4-1-6.500z" fill="#b659cf" /><path d="M6 21c2 .8 2.500 0 3-1.500L10.500 16h6.300l-.8 2.500c-.5 2-1.500 3-3 3H9c-1.500 0-2.500 0-3-.5z" fill="#f2695c" /><path d="M18.300 7.500C21.500 7.500 23 9.500 22 13l-.8 3H13l1.800-6c.5-1.500 1.500-2.500 3.500-2.500z" fill="#e070a8" /></> },
  { node: <><path d="M2 4q0-1 1-1h6l2 2.500h10q1 0 1 1V20H2z" fill="#e8a614" /><path d="M2 8h20v13q0 1-1 1H3q-1 0-1-1z" fill="#fbcf4c" /><path d="M5 22v-4q0-1.500 1.500-1.500h11q1.500 0 1.500 1.500v4z" fill="#1278c8" /></>, dot: true },
  { node: <><path d="M8 6V3.500h8V6" fill="none" stroke="#38a5dc" strokeWidth="1.600" /><rect x="2.500" y="5.500" width="19" height="16.500" rx="2" fill="#1d4e89" /><rect x="8" y="9" width="3.500" height="4" fill="#f25022" /><rect x="12.500" y="9" width="3.500" height="4" fill="#7fba00" /><rect x="8" y="14" width="3.500" height="4" fill="#00a4ef" /><rect x="12.500" y="14" width="3.500" height="4" fill="#ffb900" /></> },
  { node: <><rect x="2" y="1.500" width="20" height="21.500" rx="1" fill="#0896d7" /><text x="11.800" y="14.500" fontSize="7" fontStyle="italic" fontWeight="600" fill="#fff" textAnchor="middle" textLength="17" lengthAdjust="spacingAndGlyphs">myhp</text></> },
  { node: <><circle cx="14" cy="5.500" r="3" fill="#7b83eb" /><circle cx="20" cy="6.500" r="2" fill="#5059c9" /><path d="M9 9h14v7q-1 3-4 3-2 3-6 3-5-1-4-6z" fill="#7b83eb" /><rect x="2" y="7" width="11" height="11" rx="1" fill="#4b53bc" /><path d="M5 10h5M7.500 10v6" stroke="#fff" strokeWidth="1.500" /></> },
  { node: <path d="M3 2l9 4.500L21 2v16l-9 4.500L3 18zM7.500 8v7l4.500 2.500 4.500-2.500V8L12 10.500z" fill="#c01f2e" fillRule="evenodd" /> },
  { node: <><rect x="2" y="1" width="20" height="22" rx="2.500" fill="#ea7425" /><path d="M12 9C10 6 6 5.500 6 8.500c0 2 2 2 2 3.500s-2 1.500-2 3.500c0 3 4 2.500 6-.5 2 3 6 3.500 6 .5 0-2-2-2-2-3.500s2-1.500 2-3.500c0-3-4-2.500-6 .5zM10 12h4" fill="none" stroke="#fff" strokeWidth="2" /></> },
  { node: <><circle cx="12" cy="12" r="10.500" fill="#1475c4" /><path d="M2 9C4-1 21-2 22.500 11c0 4-4 5-8 4 2-7-4-9-12.500-6z" fill="#43c6a0" /><path d="M14 15c4 1 8-1 8.500-4 0 0-1-7-7-9 6 0 9 9 4 12-2 1-4 1.500-5.500 1z" fill="#6fd65a" /><path d="M2 9C7 5 15 7 15 12c0 1-.5 2-1 2-1-3-5-3-6 1-1 3 1 6 4 7C5 23 0 16 2 9z" fill="#1b8fd6" /><path d="M8.500 12c-1 5 4 8.500 12 5-3 5-9 6.500-13 3-2-3-2-6 1-8z" fill="#124a9c" /><path d="M14.800 11.500c.6 1 .4 2-.5 3 1.500 1.500 4.500 1.500 6.500 0l-.5 2.500c-5 1.800-9.500 0-10-2.500-.3-2 1.500-4 4.500-3z" fill="#e6f2f2" /></>, dot: true },
  { node: <><rect x="2" y="4" width="20.500" height="16" rx="4" fill="#f20d0d" /><path d="M9.500 8.500v7l6-3.500z" fill="#fff" /></> },
  { node: <><circle cx="11" cy="12" r="9.500" fill="#1e4f68" /><path d="M4 8c3-4 5-3 6-1s-2 4-4 4zM6 16l4-1 3 4-4 1zM13 4l4 2-2 3z" fill="#4c9a54" /><circle cx="13" cy="10" r="5" fill="#9bd2ea" stroke="#d8e6ea" strokeWidth="1.300" /><path d="M16 14l5 7" stroke="#d89a2c" strokeWidth="2.500" /></> },
  { node: <><path d="M2.500 22l1.600-5A9.300 9.300 0 1112 21.500a9 9 0 01-4.500-1z" fill="#fff" stroke="#1f9a4c" strokeWidth="2" /><path d="M8.500 8c1-1 2 0 2 1.500L10 11c1 2 2 2.500 3.500 3l1.300-1c2 .5 2 2 1 2.500-4 2-9-4-7.300-7.500z" fill="#1f9a4c" /></>, dot: true },
  { node: <><circle cx="12" cy="12" r="10" fill="#e8402f" /><path d="M12 12L3.300 7A10 10 0 0012 22z" fill="#2da44f" /><path d="M12 12l8.600-5A10 10 0 0112 22z" fill="#fbc116" /><path d="M3.300 7A10 10 0 0120.700 7z" fill="#e8402f" /><circle cx="12" cy="12" r="4.800" fill="#fff" /><circle cx="12" cy="12" r="3.700" fill="#3b7de0" /></>, dot: true },
  { node: <><rect x="3" y="2" width="18" height="20" fill="#f4f7fa" stroke="#dce3ea" strokeWidth=".7" /></>, dot: true, active: true },
  { node: <><path d="M17 1l5 2.500v17L17 23z" fill="#1b9be8" /><path d="M17 1v6L5 17l-3-2.500L14 4zM17 23v-6L5 7 2 9.500 14 20z" fill="#0f7ac6" /></>, dot: true },
];

function Taskbar() {
  return (
    <div className="flex h-10 items-center bg-[linear-gradient(90deg,#ece5dc,#ebe6dc_30%,#e4e5dc_45%,#e5e5dc)] text-[#222]">
      <div className="relative ml-[17px] h-7 w-7">
        <svg viewBox="0 0 28 28" className="h-7 w-7"><circle cx="10.500" cy="15.500" r="7.500" fill="#f4ac25" /><path d="M1 13h15M3 17h15M2 21h13" stroke="#fbe0a0" strokeWidth="1" /><path d="M4 19h15M7 11h10" stroke="#e08a1c" strokeWidth="1.500" /></svg>
        <span className="absolute top-0 right-[6px] flex h-[13px] w-[12px] items-center justify-center rounded-full bg-[#bf2a1f] text-[8.500px] leading-none text-white">8</span>
      </div>
      <svg viewBox="0 0 20 20" className="ml-[127px] h-5 w-5"><path d="M0 0h9.500v9.500H0z" fill="#3cc0f5" /><path d="M10.500 0H20v9.500h-9.500z" fill="#29abee" /><path d="M0 10.500h9.500V20H0z" fill="#1a9be6" /><path d="M10.500 10.500H20V20h-9.500z" fill="#0b80d6" /></svg>
      <div className="ml-[11px] flex h-[27px] w-[183px] items-center rounded-full border border-[#dcdcd6] bg-[#f8f7f3] pl-[9px] text-[12px] tracking-[-0.5px] text-[#555]">
        <svg viewBox="0 0 14 14" className="mr-[8px] h-[13px] w-[13px]" fill="none" stroke="#222" strokeWidth="1.500"><circle cx="6.500" cy="6" r="4.700" /><path d="M9.800 9.500l3 3.500" /></svg>
        Search
      </div>
      <div className="ml-px flex">
        {apps.map((a, i) => (
          <div key={i} className="relative flex h-10 w-[36.720px] flex-col items-center">
            <div className={"mt-[4px] flex h-8 w-[31px] items-center justify-center rounded " + (a.active ? "bg-[#f6f6f2]" : "")}>
              <svg viewBox="0 0 24 24" className="h-[23px] w-[23px] overflow-visible">{a.node}</svg>
            </div>
            {a.active && <Sparkle className="absolute top-[12px] left-[10px] h-4 w-4" colors={["#3d78b4", "#5c93c4"]} />}
            {a.dot && <div className={"absolute top-[34px] h-[3px] rounded-full " + (a.active ? "w-[11px] bg-[#1470c4]" : "w-[5px] bg-[#8b8b86]")} />}
            {i === 12 && <span className="absolute top-[5px] left-[18px] flex h-[14px] w-[15px] items-center justify-center rounded-full bg-[#0d6dc8] text-[8.500px] leading-none text-white">55</span>}
            {i === 13 && <span className="absolute top-[5px] left-[19px] flex h-[13px] w-[12px] items-center justify-center rounded-full bg-[#144a8c] text-[8px] leading-none text-white">S</span>}
          </div>
        ))}
      </div>
      <svg viewBox="0 0 76 20" className="mr-[13px] ml-auto h-5 w-[76px]" fill="none" stroke="#222" strokeWidth="1.200">
        <path d="M10 12l4-4 4 4" />
        <path d="M37 14h8a3 3 0 000-5.500 4.500 4.500 0 00-8 0 3 3 0 000 5.500z" fill="#c9c9c9" strokeWidth="1" />
        <path d="M62 9a6 6 0 0111-2M73 3v4h-4M73 11.500a6 6 0 01-10 2.500M62 17.500v-3.500h3.500" /><circle cx="71.500" cy="14" r="3.300" fill="#f2a01e" stroke="none" />
      </svg>
      <div className="mr-[13px] text-center text-[10.500px] leading-[13px] tracking-[-0.4px]">ENG<br />IN</div>
      <svg viewBox="0 0 56 16" className="mr-[14px] h-4 w-[56px]" fill="none" stroke="#222" strokeWidth="1.100">
        <path d="M1.500 6c4-3.500 8-3.500 12 0M3.500 8.500c3-2.500 5.500-2.500 8 0M5.500 10.800c1.500-1.300 2.500-1.300 4 0" /><circle cx="7.500" cy="12.500" r=".8" fill="#222" />
        <path d="M21.500 6.500h2l3.500-3v9l-3.500-3h-2zM29 6q1.300 2 0 4M31 4.500q2.500 3.500 0 7M33 3q3.500 5 0 10" strokeWidth="1" />
        <rect x="44" y="5" width="9.500" height="7" rx="1.500" fill="#222" /><path d="M54.500 7v3M43.500 2.500v3M46 2.500v3M42 6.500h6M44.700 6.500v4" strokeWidth="1.200" />
      </svg>
      <div className="mr-[15px] text-right text-[10.500px] leading-[13px] tracking-[-0.3px] whitespace-nowrap">12:55<br />03-06-2025</div>
    </div>
  );
}

export default function App() {
  return (
    <div className="relative flex h-[720px] w-[1280px] flex-col overflow-hidden bg-[#f5f5f5] font-['Noto_Sans','Open_Sans',sans-serif]">
      <TitleBar />
      <MenuBar />
      <Banner />
      <Toolbar />
      <div className="-mt-px flex h-[535px]">
        <SidePane />
        <Dashboard />
        <div className="flex flex-1 justify-end bg-[#f4f4f4]">
          <div className="w-[13px] bg-[#f9f9f9] pt-[441px]"><div className="ml-[5px] h-[79px] w-[2px] rounded bg-[#777]" /></div>
        </div>
      </div>
      <SheetTabs />
      <StatusBar />
      <Taskbar />
      <ShowMe />
    </div>
  );
}
